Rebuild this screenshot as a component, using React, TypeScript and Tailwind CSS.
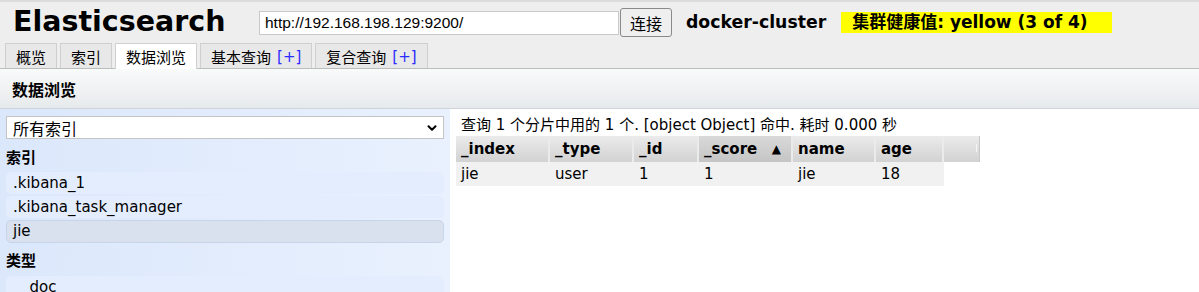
import { ChevronDown } from "lucide-react";

const tabs = [
  { label: "概览" },
  { label: "索引" },
  { label: "数据浏览", active: true },
  { label: "基本查询", plus: true },
  { label: "复合查询", plus: true },
];

const cols = [
  { key: "_index", w: "w-[94px]" },
  { key: "_type", w: "w-[84px]" },
  { key: "_id", w: "w-[65px]" },
  { key: "_score", w: "w-[94px]", sorted: true },
  { key: "name", w: "w-[83px]" },
  { key: "age", w: "w-[68px]" },
];

const row = ["jie", "user", "1", "1", "jie", "18"];

const cjk = "font-['Noto_Sans_CJK_SC',sans-serif]";

export default function App() {
  return (
    <div className="h-[292px] w-[1199px] overflow-hidden bg-white font-['DejaVu_Sans','Noto_Sans_CJK_SC',sans-serif] text-black">
      {/* top bar */}
      <div className="border-t-2 border-[#dcdcdc] bg-[#eeeeee]">
        <div className="flex h-[41px] items-center">
          <h1 className="ml-[13px] w-[246px] text-[28.5px] font-bold leading-none">Elasticsearch</h1>
          <input
            className="h-[24px] w-[360px] border border-[#c8c8c8] bg-white px-[5px] font-['Liberation_Sans',sans-serif] text-[15.5px] outline-none"
            defaultValue="http://192.168.198.129:9200/"
          />
          <button className={`ml-px h-[29px] w-[52px] rounded-[3px] border border-[#8a8a8a] bg-[#efefef] text-[16px] ${cjk}`}>
            连接
          </button>
          <span className="ml-[14px] text-[17.3px] font-bold">docker-cluster</span>
          <span className="ml-[15px] flex h-[21px] w-[271px] items-center bg-[#ffff00] pl-[11px] text-[17px] font-bold">
            集群健康值: yellow (3 of 4)
          </span>
        </div>

        {/* tabs */}
        <div className="flex h-[25px] items-end gap-[3px] pl-[5px]">
          {tabs.map((t) => (
            <div
              key={t.label}
              className={`flex h-[25px] items-center border border-b-0 px-[10px] pt-[2px] text-[15px] ${
                t.active ? "relative -mb-px h-[26px] border-[#d0d0d0] bg-white" : "border-[#cfcfcf] bg-[#e8e8e8]"
              }`}
            >
              <span className={cjk}>{t.label}</span>
              {t.plus && <span className="ml-[6px] text-[#2b2bff]">[+]</span>}
            </div>
          ))}
        </div>
      </div>

      {/* section header */}
      <div className="flex h-[41px] items-center border-y border-t-[#bcbcbc] border-b-[#cfd4d8] bg-gradient-to-b from-[#f9fafa] to-[#e7eaec] pl-[12px]">
        <span className={`text-[16px] font-bold ${cjk}`}>数据浏览</span>
      </div>

      {/* body */}
      <div className="flex">
        <div className="h-[184px] w-[450px] bg-gradient-to-r from-[#dbe7fb] to-[#e9f1fe] px-[6px] pt-[7px]">
          <div className="flex h-[23px] items-center justify-between border border-[#c4c4c4] bg-white pl-[6px] pr-[4px]">
            <span className={`text-[16px] ${cjk}`}>所有索引</span>
            <ChevronDown className="h-[14px] w-[14px]" strokeWidth={3.5} />
          </div>
          <div className={`mt-[8px] text-[15px] font-bold leading-[20px] ${cjk}`}>索引</div>
          <div className="mt-[5px] flex flex-col gap-[2px] text-[15px]">
            <div className="flex h-[22px] items-center rounded-[5px] bg-[#e4edfd] pl-[7px]">.kibana_1</div>
            <div className="flex h-[22px] items-center rounded-[5px] bg-[#e4edfd] pl-[7px]">.kibana_task_manager</div>
            <div className="flex h-[23px] items-center rounded-[5px] border border-[#c7d5ea] bg-[#d8e1ed] pl-[6px]">jie</div>
          </div>
          <div className={`mt-[7px] text-[15px] font-bold leading-[20px] ${cjk}`}>类型</div>
          <div className="mt-[6px] flex h-[22px] items-start rounded-[5px] bg-[#e4edfd] pl-[16px] pt-[2px] text-[15px] leading-[18px]">_doc</div>
        </div>

        <div className="flex-1 pl-[6px] pt-[7px]">
          <div className="pl-[5px] text-[15px] leading-[18px]">
            查询 1 个分片中用的 1 个. [object Object] 命中. 耗时 0.000 秒
          </div>
          <div className="mt-[2px] flex">
            {cols.map((c) => (
              <div
                key={c.key}
                className={`flex h-[26px] items-center border-r-2 border-[#ebebeb] pl-[5px] text-[15px] font-bold ${c.w} ${
                  c.sorted
                    ? "justify-between bg-gradient-to-b from-[#d9d9d9] to-[#c5c5c5] pr-[10px]"
                    : "bg-gradient-to-b from-[#ebebeb] to-[#d2d2d2]"
                }`}
              >
                <span>{c.key}</span>
                {c.sorted && <span className="text-[12px]">▲</span>}
              </div>
            ))}
            <div className="relative h-[26px] w-[36px] border-r border-[#c8c8c8] bg-gradient-to-b from-[#ebebeb] to-[#d2d2d2]">
              <div className="absolute right-[2px] top-[8px] h-[8px] w-px bg-[#f5f5f5]" />
            </div>
          </div>
          <div className="flex w-[488px] bg-[#f1f1f1]">
            {cols.map((c, i) => (
              <div key={c.key} className={`flex h-[24px] items-center pl-[5px] text-[15px] ${c.w}`}>
                {row[i]}
              </div>
            ))}
          </div>
        </div>
      </div>
    </div>
  );
}
